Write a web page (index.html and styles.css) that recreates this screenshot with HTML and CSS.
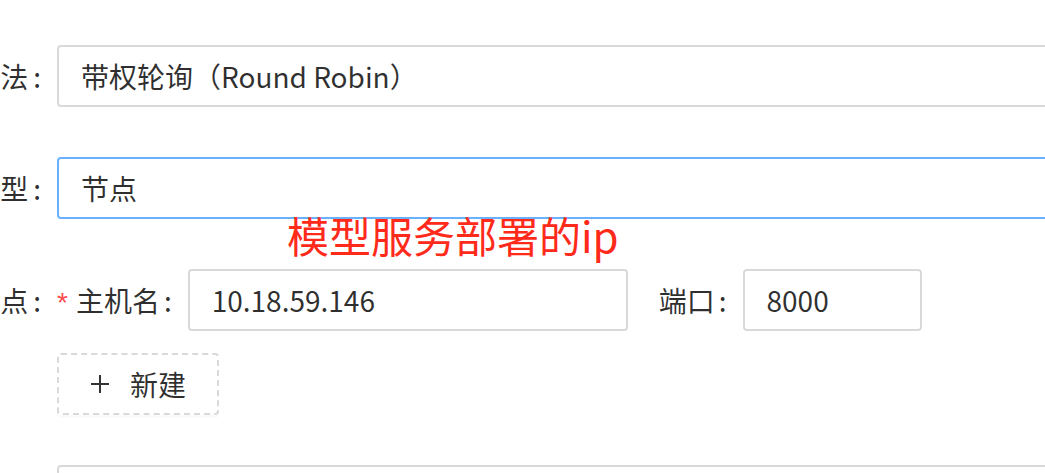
FILE: index.html
```html
<!DOCTYPE html>
<html lang="zh-CN">
<head>
<meta charset="utf-8">
<title>负载均衡配置</title>
<link rel="stylesheet" href="styles.css">
</head>
<body>
<div class="page">
  <form class="form">
    <div class="form-item">
      <label class="form-label">负载均衡算法</label>
      <div class="form-control">
        <div class="input">带权轮询（Round Robin）</div>
      </div>
    </div>
    <div class="form-item">
      <label class="form-label">节点类型</label>
      <div class="form-control">
        <div class="input input-active">节点</div>
      </div>
    </div>
    <div class="form-item">
      <label class="form-label">节点</label>
      <div class="form-control">
        <div class="node-row">
          <label class="sub-label"><span class="required">*</span>主机名</label>
          <div class="input input-host">10.18.59.146</div>
          <label class="sub-label sub-label-port">端口</label>
          <div class="input input-port">8000</div>
        </div>
        <button type="button" class="add-btn">
          <svg class="plus" viewBox="0 0 20 20" width="20" height="20" aria-hidden="true"><path d="M10 1v18M1 10h18" stroke="#333" stroke-width="2" fill="none"/></svg>
          <span>新建</span>
        </button>
      </div>
    </div>
    <div class="form-item">
      <label class="form-label">健康检查</label>
      <div class="form-control">
        <div class="input"></div>
      </div>
    </div>
  </form>
  <div class="annotation">模型服务部署的ip</div>
</div>
</body>
</html>
```
FILE: styles.css
```css
html, body {
  margin: 0;
  padding: 0;
  background: #ffffff;
  overflow: hidden;
}
.page {
  position: relative;
  width: 1045px;
  height: 473px;
  overflow: hidden;
  font-family: "Noto Sans CJK SC", "Noto Sans", sans-serif;
  font-size: 28px;
  color: rgba(0, 0, 0, 0.82);
}
.form {
  width: 1500px;
  margin-left: -243px;
  padding-top: 45px;
}
.form-item {
  display: flex;
  align-items: flex-start;
  margin-bottom: 50px;
}
.form-label {
  flex: none;
  width: 300px;
  height: 62px;
  line-height: 62px;
  text-align: right;
  white-space: nowrap;
}
.form-label::after {
  content: ":";
  margin: 0 16px 0 5px;
}
.sub-label::after {
  content: ":";
  margin: 0 16px 0 4px;
}
.form-control {
  flex: 1;
  display: flex;
  flex-direction: column;
  align-items: flex-start;
}
.input {
  box-sizing: border-box;
  align-self: stretch;
  height: 62px;
  line-height: 58px;
  padding: 0 22px;
  border: 2px solid #d9d9d9;
  border-radius: 4px;
  background: #fff;
  white-space: nowrap;
}
.input-active {
  border-color: #69b1ff;
}
.node-row {
  display: flex;
  align-items: center;
  align-self: stretch;
}
.sub-label {
  height: 62px;
  line-height: 62px;
  white-space: nowrap;
}
.required {
  color: #ff4d4f;
  margin-right: 8px;
  font-family: "Liberation Sans", sans-serif;
}
.sub-label-port {
  margin-left: 31px;
}
.input-host {
  width: 440px;
  align-self: auto;
}
.input-port {
  width: 179px;
  align-self: auto;
}
.add-btn {
  box-sizing: border-box;
  margin-top: 22px;
  width: 162px;
  height: 62px;
  display: flex;
  align-items: center;
  justify-content: center;
  gap: 20px;
  padding: 0;
  border: 2px dashed #d9d9d9;
  border-radius: 4px;
  background: #fff;
  box-shadow: 0 3px 0 rgba(0, 0, 0, 0.02);
  font: inherit;
  color: inherit;
}
.plus {
  display: block;
}
.annotation {
  position: absolute;
  left: 287px;
  top: 205px;
  font-size: 42px;
  line-height: 60px;
  color: #ff2a1a;
  white-space: nowrap;
}
```
